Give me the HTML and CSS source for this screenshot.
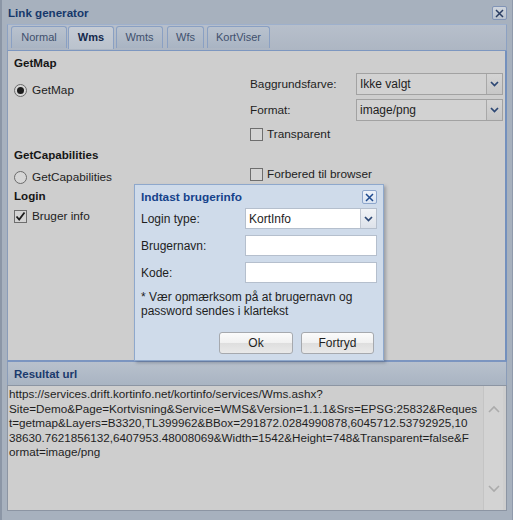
FILE: index.html
```html
<!DOCTYPE html>
<html>
<head>
<meta charset="utf-8">
<link rel="stylesheet" href="styles.css">
</head>
<body>
<div class="win">
  <div class="head">
    <span class="title">Link generator</span>
    <span class="xbtn main-x"><svg width="9" height="9" viewBox="0 0 9 9"><path d="M1 1L8 8M8 1L1 8" stroke="#2a3d62" stroke-width="1.5" fill="none"/></svg></span>
  </div>
  <div class="tabstrip">
    <div class="tab w-normal">Normal</div>
    <div class="tab w-wms active">Wms</div>
    <div class="tab w-wmts">Wmts</div>
    <div class="tab w-wfs">Wfs</div>
    <div class="tab w-kort">KortViser</div>
  </div>
  <div class="tabbody">
    <div class="col-left">
      <div class="hd hd-getmap">GetMap</div>
      <div class="opt opt-1"><span class="radio on"></span>GetMap</div>
      <div class="hd hd-getcap">GetCapabilities</div>
      <div class="opt opt-2"><span class="radio"></span>GetCapabilities</div>
      <div class="hd hd-login">Login</div>
      <div class="opt opt-3"><span class="check"><svg width="11" height="11" viewBox="0 0 11 11"><path d="M1.5 5.5L4.2 8.5L9.5 1.5" stroke="#1c1c1c" stroke-width="1.8" fill="none"/></svg></span>Bruger info</div>
    </div>
    <div class="col-right">
      <div class="field">
        <span class="lbl">Baggrundsfarve:</span>
        <div class="combo"><span class="val">Ikke valgt</span><span class="trig"><svg width="9" height="6" viewBox="0 0 9 6"><path d="M1 1L4.5 4.5L8 1" stroke="#2c4774" stroke-width="1.7" fill="none"/></svg></span></div>
      </div>
      <div class="field field-2">
        <span class="lbl">Format:</span>
        <div class="combo"><span class="val">image/png</span><span class="trig"><svg width="9" height="6" viewBox="0 0 9 6"><path d="M1 1L4.5 4.5L8 1" stroke="#2c4774" stroke-width="1.7" fill="none"/></svg></span></div>
      </div>
      <div class="opt opt-trans"><span class="check"></span>Transparent</div>
      <div class="opt opt-forb"><span class="check"></span>Forbered til browser</div>
    </div>
  </div>
  <div class="result-head">Resultat url</div>
  <div class="result">
    <div class="result-text">https://services.drift.kortinfo.net/kortinfo/services/Wms.ashx?<br>Site=Demo&amp;Page=Kortvisning&amp;Service=WMS&amp;Version=1.1.1&amp;Srs=EPSG:25832&amp;Reques<br>t=getmap&amp;Layers=B3320,TL399962&amp;BBox=291872.0284990878,6045712.53792925,10<br>38630.7621856132,6407953.48008069&amp;Width=1542&amp;Height=748&amp;Transparent=false&amp;F<br>ormat=image/png</div>
    <div class="scroll">
      <svg width="12" height="8" viewBox="0 0 12 8"><path d="M1 7L6 2L11 7" stroke="#ababab" stroke-width="1.6" fill="none"/></svg>
      <svg width="12" height="8" viewBox="0 0 12 8"><path d="M1 1L6 6L11 1" stroke="#ababab" stroke-width="1.6" fill="none"/></svg>
    </div>
  </div>
</div>

<div class="dialog">
  <div class="dlg-head">
    <span class="dlg-title">Indtast brugerinfo</span>
    <span class="xbtn dlg-x"><svg width="9" height="9" viewBox="0 0 9 9"><path d="M1 1L8 8M8 1L1 8" stroke="#1f4a8e" stroke-width="1.5" fill="none"/></svg></span>
  </div>
  <div class="dlg-body">
    <div class="dlg-form">
      <span class="dlbl">Login type:</span>
      <div class="dcombo"><span class="val">KortInfo</span><span class="dtrig"><svg width="9" height="6" viewBox="0 0 9 6"><path d="M1 1L4.5 4.5L8 1" stroke="#2c4774" stroke-width="1.7" fill="none"/></svg></span></div>
      <span class="dlbl">Brugernavn:</span>
      <div class="dinput"></div>
      <span class="dlbl">Kode:</span>
      <div class="dinput"></div>
    </div>
    <div class="note">* Vær opmærksom på at brugernavn og<br>password sendes i klartekst</div>
    <div class="btns">
      <div class="btn b-ok">Ok</div>
      <div class="btn b-fort">Fortryd</div>
    </div>
  </div>
</div>
</body>
</html>
```

FILE: styles.css
```css
html, body {
  margin: 0;
  padding: 0;
}
body {
  font-family: "Liberation Sans", Arial, sans-serif;
  font-size: 11.8px;
  color: #1e1e1e;
  width: 513px;
  height: 520px;
  overflow: hidden;
  position: relative;
}
.win {
  width: 513px;
  height: 520px;
  box-sizing: border-box;
  border-left: 2px solid #8b96a6;
  border-right: 1px solid #8f9aab;
  background: #a7b1be;
  padding: 0 5px 9px 5px;
  display: flex;
  flex-direction: column;
}
.head {
  height: 24px;
  flex: none;
  display: flex;
  justify-content: space-between;
  align-items: flex-start;
}
.title {
  font-weight: bold;
  font-size: 11.6px;
  color: #16386b;
  padding-left: 1px;
  line-height: 26px;
}
.xbtn {
  display: flex;
  align-items: center;
  justify-content: center;
  box-sizing: border-box;
  width: 15px;
  height: 14px;
  border-radius: 2px;
}
.main-x {
  margin-top: 6px;
  border: 1px solid #8194b6;
  background: linear-gradient(#d0d6de, #b9c2ce);
}
.tabstrip {
  height: 27px;
  flex: none;
  box-sizing: border-box;
  border: 1px solid #8ca1c2;
  border-top-color: #9eb0cc;
  border-bottom: 1px solid #7d97c0;
  background: linear-gradient(#b7bfcb, #adb6c3);
  display: flex;
  align-items: flex-start;
  padding: 1px 0 0 3px;
  gap: 3px;
}
.tab {
  height: 22px;
  box-sizing: border-box;
  border: 1px solid #8aa0c3;
  border-bottom: none;
  border-radius: 3px 3px 0 0;
  background: linear-gradient(#b9c2ce, #a9b4c3);
  color: #3f506d;
  font-size: 11px;
  text-align: center;
  line-height: 21px;
}
.tab.active {
  background: linear-gradient(#c6ccd5, #bac2cd);
  color: #14294c;
  font-weight: bold;
  height: 23px;
}
.w-normal { width: 56px; margin-right: -2px; }
.w-wms { width: 46px; }
.w-wmts { width: 47px; margin-left: -1px; }
.w-wfs { width: 37px; margin-left: 1px; }
.w-kort { width: 63px; }

.tabbody {
  height: 311px;
  flex: none;
  box-sizing: border-box;
  background: #cecece;
  border-left: 1px solid #8a9cb8;
  border-right: 2px solid #7390bd;
  border-bottom: 2px solid #7b95c0;
  padding-left: 6px;
  display: flex;
}
.col-left {
  width: 236px;
  flex: none;
  display: flex;
  flex-direction: column;
  padding-top: 4px;
}
.hd {
  font-weight: bold;
  font-size: 11.6px;
  color: #161616;
  line-height: 16px;
}
.opt {
  display: flex;
  align-items: center;
  height: 20px;
  gap: 5px;
  color: #222;
}
.opt-1 { margin-top: 9px; }
.hd-getcap { margin-top: 47px; }
.opt-2 { margin-top: 4px; }
.hd-login { margin-top: 1px; }
.opt-3 { margin-top: 2px; }

.radio {
  width: 13px;
  height: 13px;
  box-sizing: border-box;
  border: 1px solid #6b6b6b;
  border-radius: 50%;
  background: #d6d6d6;
  display: flex;
  align-items: center;
  justify-content: center;
  flex: none;
}
.radio.on::after {
  content: "";
  width: 7px;
  height: 7px;
  border-radius: 50%;
  background: #1b1b1b;
}
.check {
  width: 13px;
  height: 13px;
  box-sizing: border-box;
  border: 1px solid #6e6e6e;
  background: #d4d4d4;
  display: flex;
  align-items: center;
  justify-content: center;
  flex: none;
}

.col-right {
  flex: 1;
  display: flex;
  flex-direction: column;
  padding-top: 22px;
}
.field {
  display: flex;
  align-items: center;
  height: 22px;
}
.field-2 { margin-top: 4px; }
.lbl {
  width: 106px;
  flex: none;
}
.combo {
  width: 147px;
  height: 22px;
  box-sizing: border-box;
  border: 1px solid #a2a2a2;
  background: #d2d2d2;
  display: flex;
  align-items: center;
}
.combo .val {
  flex: 1;
  padding-left: 3px;
  font-size: 12px;
}
.trig {
  width: 16px;
  height: 20px;
  box-sizing: border-box;
  border-left: 1px solid #a8a8a8;
  background: linear-gradient(#d4d4d4, #c7c7c7);
  display: flex;
  align-items: center;
  justify-content: center;
}
.opt-trans { margin-top: 3px; gap: 4px; }
.opt-forb { margin-top: 20px; gap: 4px; }

.result-head {
  height: 23px;
  flex: none;
  box-sizing: border-box;
  background: linear-gradient(#b8c1cd, #a9b4c2);
  border-left: 1px solid #8a9cb8;
  border-right: 1px solid #8a9cb8;
  font-weight: bold;
  font-size: 11.5px;
  color: #1b3a6d;
  padding-left: 6px;
  line-height: 25px;
}
.result {
  flex: 1;
  box-sizing: border-box;
  border: 1px solid #8c95a3;
  background: #cecece;
  display: flex;
  overflow: hidden;
}
.result-text {
  flex: 1;
  min-width: 0;
  padding: 1px 0 0 1px;
  line-height: 14.6px;
  font-size: 11.7px;
  color: #1e1e1e;
  white-space: nowrap;
}
.scroll {
  width: 19px;
  flex: none;
  background: #d3d3d3;
  border-left: 1px solid #c4c4c4;
  display: flex;
  flex-direction: column;
  align-items: center;
  justify-content: space-between;
  padding: 19px 0 17px;
  margin-right: 3px;
}

.dialog {
  position: absolute;
  left: 134px;
  top: 184px;
  width: 250px;
  height: 177px;
  box-sizing: border-box;
  border: 1px solid #8ea8cc;
  background: #cfdbea;
  box-shadow: 2px 2px 3px rgba(60, 70, 90, 0.35);
  display: flex;
  flex-direction: column;
  font-size: 12px;
}
.dlg-head {
  height: 22px;
  flex: none;
  display: flex;
  justify-content: space-between;
  align-items: flex-start;
  padding: 0 6px;
}
.dlg-title {
  font-weight: bold;
  font-size: 11.8px;
  color: #15428b;
  line-height: 24px;
}
.dlg-x {
  margin-top: 5px;
  border: 1px solid #8ea7cc;
  background: linear-gradient(#eef3fa, #d9e3f1);
}
.dlg-body {
  padding: 1px 9px 0 6px;
  display: flex;
  flex-direction: column;
}
.dlg-form {
  display: grid;
  grid-template-columns: 104px 132px;
  row-gap: 6px;
  align-items: center;
}
.dcombo, .dinput {
  height: 21px;
  box-sizing: border-box;
  border: 1px solid #b5bfcd;
  background: #ffffff;
}
.dcombo {
  display: flex;
  align-items: center;
}
.dcombo .val {
  flex: 1;
  padding-left: 3px;
}
.dtrig {
  width: 16px;
  height: 19px;
  box-sizing: border-box;
  border-left: 1px solid #c2c8d2;
  background: linear-gradient(#f2f4f7, #dde2ea);
  display: flex;
  align-items: center;
  justify-content: center;
}
.note {
  margin-top: 7px;
  line-height: 14px;
}
.btns {
  margin-top: 14px;
  display: flex;
  justify-content: flex-end;
  gap: 8px;
}
.btn {
  height: 22px;
  box-sizing: border-box;
  border: 1px solid #a6a9ae;
  border-radius: 3px;
  background: linear-gradient(#fbfbfb 0%, #f0f0f0 50%, #dedede 51%, #e9e9e9 100%);
  text-align: center;
  line-height: 20px;
  color: #1e1e1e;
}
.b-ok { width: 74px; }
.b-fort { width: 73px; }
```
